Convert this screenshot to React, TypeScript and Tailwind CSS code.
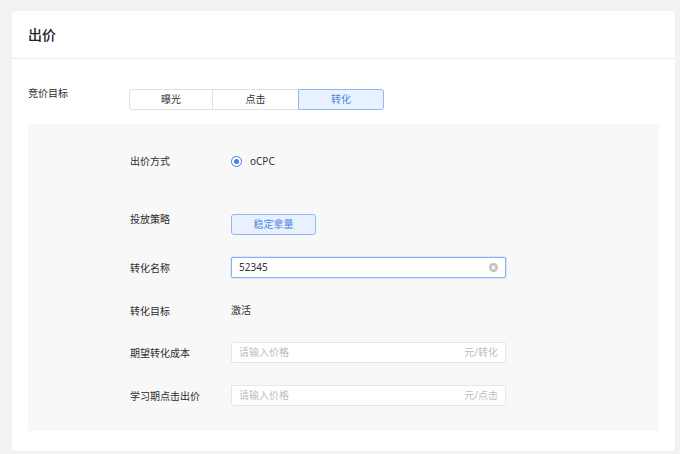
import React from "react";

const font = { fontFamily: '"Noto Sans", "Noto Sans CJK SC", sans-serif' };

function Row({ label, children, top = false, className = "" }: { label: string; children: React.ReactNode; top?: boolean; className?: string }) {
  return (
    <div className={`flex ${top ? "items-start" : "items-center"} ${className}`}>
      <div className={`w-[101px] shrink-0 text-[10px] leading-[12px] text-[#2b2b2b] ${top ? "mt-[-1px]" : ""}`}>{label}</div>
      {children}
    </div>
  );
}

function PriceInput({ suffix }: { suffix: string }) {
  return (
    <div className="flex h-[21px] w-[275px] items-center justify-between rounded-[2px] border border-[#e6e6e6] bg-white px-[7px] text-[10px]">
      <span className="text-[#bdbdbd]">请输入价格</span>
      <span className="text-[#bdbdbd]">{suffix}</span>
    </div>
  );
}

export default function App() {
  return (
    <div className="min-h-[454px] w-[680px] bg-[#f2f2f2] pl-[12px] pr-[5px] pt-[11px] pb-[3px]" style={font}>
      <div className="h-[440px] rounded-[4px] bg-white">
        <div className="flex h-[48px] items-center border-b border-[#ebebeb] px-[16px]">
          <span className="text-[14px] font-medium text-[#222]">出价</span>
        </div>
        <div className="px-[16px] pt-[28px]">
          <div className="flex items-start">
            <div className="w-[101px] shrink-0 text-[10px] leading-[12px] text-[#2b2b2b]">竞价目标</div>
            <div className="mt-[2px] flex h-[21px] text-[10px]">
              <div className="flex w-[84px] items-center justify-center rounded-l-[3px] border border-[#e0e0e0] text-[#333]">曝光</div>
              <div className="flex w-[85px] items-center justify-center border-y border-[#e0e0e0] text-[#333]">点击</div>
              <div className="flex w-[86px] items-center justify-center rounded-r-[3px] border border-[#8fb8f7] bg-[#e9f1fe] text-[#4b82e6]">转化</div>
            </div>
          </div>
          <div className="mt-[14px] h-[307px] rounded-[2px] bg-[#f8f8f8] pl-[102px] pt-[27px]">
            <Row label="出价方式" className="h-[20px]">
              <div className="flex items-center">
                <div className="flex h-[11px] w-[11px] items-center justify-center rounded-full border border-[#3d7ef0] bg-white">
                  <div className="h-[5px] w-[5px] rounded-full bg-[#3d7ef0]" />
                </div>
                <span className="ml-[8px] text-[10px] text-[#333]">oCPC</span>
              </div>
            </Row>
            <Row label="投放策略" top className="mt-[43px]">
              <div className="flex h-[21px] w-[85px] items-center justify-center rounded-[3px] border border-[#8fb8f7] bg-[#e9f1fe] text-[10px] text-[#4b82e6]">稳定拿量</div>
            </Row>
            <Row label="转化名称" className="mt-[22px]">
              <div className="flex h-[21px] w-[275px] items-center justify-between rounded-[2px] border border-[#86b2f6] bg-white px-[7px] text-[10px] text-[#333] shadow-[0_0_0_1px_rgba(134,178,246,0.25)]">
                <span>52345</span>
                <span className="flex h-[9px] w-[9px] items-center justify-center rounded-full bg-[#c4c4c4]">
                  <svg width="5" height="5" viewBox="0 0 5 5"><path d="M1 1L4 4M4 1L1 4" stroke="white" strokeWidth="1.3" /></svg>
                </span>
              </div>
            </Row>
            <Row label="转化目标" className="mt-[22px] h-[21px]">
              <span className="text-[10px] text-[#333]">激活</span>
            </Row>
            <Row label="期望转化成本" className="mt-[21px]">
              <PriceInput suffix="元/转化" />
            </Row>
            <Row label="学习期点击出价" className="mt-[22px]">
              <PriceInput suffix="元/点击" />
            </Row>
          </div>
        </div>
      </div>
    </div>
  );
}
